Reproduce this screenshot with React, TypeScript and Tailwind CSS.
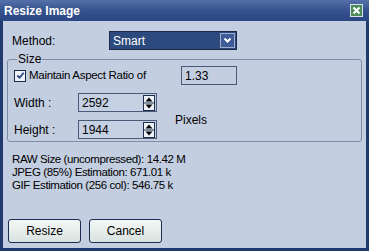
import React from 'react';

function Spinner() {
  return (
    <div className="flex h-[16px] w-[12px] flex-col border border-[#1c2c4c] bg-[#eef2f8]">
      <svg viewBox="0 0 10 14" className="h-full w-full">
        <path d="M5 1.5 L8.5 5.5 L1.5 5.5 Z" fill="#000" />
        <line x1="0" y1="7" x2="10" y2="7" stroke="#1c2c4c" strokeWidth="1" />
        <path d="M1.5 8.5 L8.5 8.5 L5 12.5 Z" fill="#000" />
      </svg>
    </div>
  );
}

function NumField({ value }: { value: string }) {
  return (
    <div className="flex h-[19px] w-[79px] items-center justify-between border border-[#4a5a78] bg-[#c5d0e2] pl-[3px] pr-[1px]">
      <span>{value}</span>
      <Spinner />
    </div>
  );
}

export default function App() {
  return (
    <div
      className="flex h-[251px] w-[369px] flex-col bg-[#1e3a6e] text-[11px] text-black"
      style={{ fontFamily: '"Liberation Sans", Arial, sans-serif' }}
    >
      {/* Title bar */}
      <div className="flex h-[21px] items-center justify-between bg-gradient-to-b from-[#5471aa] via-[#35528e] to-[#2a4682] pl-[4px] pr-[6px]">
        <span className="text-[12px] font-bold text-white">Resize Image</span>
        <div className="flex h-[13px] w-[13px] items-center justify-center border border-[#d8e0ee] bg-[#4d8a5a]">
          <svg viewBox="0 0 9 9" className="h-[9px] w-[9px]">
            <path d="M1.5 1.5 L7.5 7.5 M7.5 1.5 L1.5 7.5" stroke="#fff" strokeWidth="2" />
          </svg>
        </div>
      </div>

      {/* Body */}
      <div className="mx-[3px] mb-[3px] flex flex-1 flex-col bg-[#c3cee0] px-[4px]">
        <div className="mt-[10px] flex items-center pl-[5px]">
          <span className="w-[97px] text-[12px]">Method:</span>
          <div className="flex h-[19px] w-[128px] items-center border border-[#1a2a48] bg-[#2c4a7e] pr-[1px] text-[12px] text-white">
            <span className="flex-1 pl-[3px]">Smart</span>
            <div className="flex h-[15px] w-[15px] items-center justify-center border border-[#9fb0d0] bg-[#3d5b97]">
              <svg viewBox="0 0 9 7" className="h-[7px] w-[9px]">
                <path d="M1.5 1.5 L4.5 4.5 L7.5 1.5" stroke="#fff" strokeWidth="2" fill="none" />
              </svg>
            </div>
          </div>
        </div>

        {/* Size group */}
        <fieldset className="mt-[3px] h-[89px] rounded-[3px] border border-[#7f8ca6] pl-[6px] pr-[8px]">
          <legend className="ml-[3px] px-[1px] text-[12px] leading-[13px]">Size</legend>
          <div className="flex items-center">
            <div className="flex h-[12px] w-[12px] items-center justify-center border border-[#1c2c4c] bg-[#eef2f8]">
              <svg viewBox="0 0 10 10" className="h-[9px] w-[9px]">
                <path d="M1.5 5 L4 7.5 L8.5 2" stroke="#21457e" strokeWidth="2" fill="none" />
              </svg>
            </div>
            <span className="ml-[3px] w-[152px] text-[11.5px] tracking-[-0.3px]">Maintain Aspect Ratio of</span>
            <div className="flex h-[19px] w-[56px] items-center border border-[#4a5a78] pl-[3px] text-[12px]">1.33</div>
          </div>
          <div className="mt-[8px] flex text-[12px]">
            <div className="flex flex-col gap-[8px]">
              <div className="flex items-center">
                <span className="w-[64px]">Width :</span>
                <NumField value="2592" />
              </div>
              <div className="flex items-center">
                <span className="w-[64px]">Height :</span>
                <NumField value="1944" />
              </div>
            </div>
            <span className="ml-[18px] mt-[18px]">Pixels</span>
          </div>
        </fieldset>

        <div className="mt-[11px] pl-[5px] text-[11.5px] leading-[13px] tracking-[-0.4px]">
          <div>RAW Size (uncompressed): 14.42 M</div>
          <div>JPEG (85%) Estimation: 671.01 k</div>
          <div>GIF Estimation (256 col): 546.75 k</div>
        </div>

        <div className="mt-auto mb-[5px] flex gap-[8px] pl-[1px] text-[12px]">
          <button className="h-[24px] w-[73px] rounded-[3px] border border-[#1c2c4c] bg-gradient-to-b from-[#f4f8f6] to-[#d8e2e0]">
            Resize
          </button>
          <button className="h-[24px] w-[73px] rounded-[3px] border border-[#1c2c4c] bg-gradient-to-b from-[#f4f8f6] to-[#d8e2e0]">
            Cancel
          </button>
        </div>
      </div>
    </div>
  );
}
